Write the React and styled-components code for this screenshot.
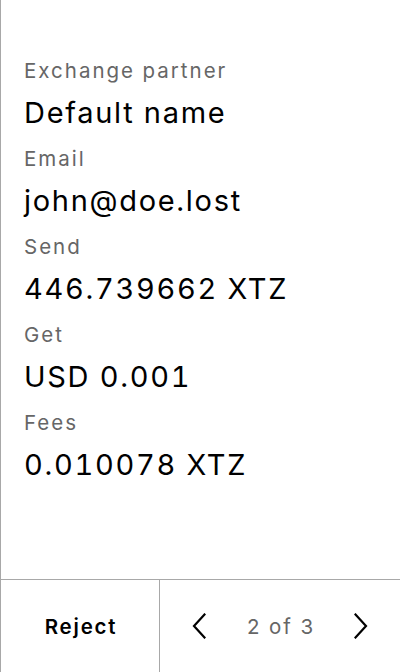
import styled, { createGlobalStyle } from "styled-components";

const Global = createGlobalStyle`
  body {
    margin: 0;
    font-family: Inter, "Noto Sans", sans-serif;
    background: #fff;
  }
`;

const Screen = styled.div`
  width: 400px;
  height: 672px;
  box-sizing: border-box;
  border-left: 1px solid #a8a8a8;
  display: flex;
  flex-direction: column;
`;

const Details = styled.div`
  flex: 1;
  padding: 57px 0 0 23px;
  display: flex;
  flex-direction: column;
  font-variant-numeric: tabular-nums;
`;

const Label = styled.div`
  font-size: 20.5px;
  line-height: 28px;
  letter-spacing: 2px;
  color: #666;
  margin-bottom: 10px;
`;

const Value = styled.div`
  font-size: 29px;
  line-height: 36px;
  letter-spacing: 1.7px;
  color: #000;
  margin-bottom: 14px;
`;

const Footer = styled.div`
  height: 92px;
  border-top: 1px solid #a8a8a8;
  display: flex;
`;

const RejectButton = styled.button`
  width: 159px;
  border: none;
  border-right: 1px solid #a8a8a8;
  background: none;
  font-family: inherit;
  font-size: 20.5px;
  font-weight: 600;
  letter-spacing: 1.8px;
  color: #000;
  padding: 0 0 0 2px;
`;

const Pager = styled.div`
  flex: 1;
  display: flex;
  align-items: center;
  justify-content: space-between;
  padding: 0 32px;
`;

const PageText = styled.span`
  font-size: 20.5px;
  letter-spacing: 1.9px;
  color: #666;
  margin-right: -2px;
`;

const Arrow = styled.svg`
  width: 14px;
  height: 26px;
`;

const Chevron = ({ dir }) => (
  <Arrow viewBox="0 0 14 26" fill="none" stroke="#000" strokeWidth="2.2" strokeLinecap="square">
    {dir === "left" ? <path d="M12.5 1.5 L2 13 L12.5 24.5" /> : <path d="M1.5 1.5 L12 13 L1.5 24.5" />}
  </Arrow>
);

const rows = [
  ["Exchange partner", "Default name"],
  ["Email", "john@doe.lost"],
  ["Send", "446.739662 XTZ"],
  ["Get", "USD 0.001"],
  ["Fees", "0.010078 XTZ"],
];

export default function App() {
  return (
    <>
      <Global />
      <Screen>
        <Details>
          {rows.map(([label, value]) => (
            <div key={label}>
              <Label>{label}</Label>
              <Value>{value}</Value>
            </div>
          ))}
        </Details>
        <Footer>
          <RejectButton>Reject</RejectButton>
          <Pager>
            <Chevron dir="left" />
            <PageText>2 of 3</PageText>
            <Chevron dir="right" />
          </Pager>
        </Footer>
      </Screen>
    </>
  );
}
